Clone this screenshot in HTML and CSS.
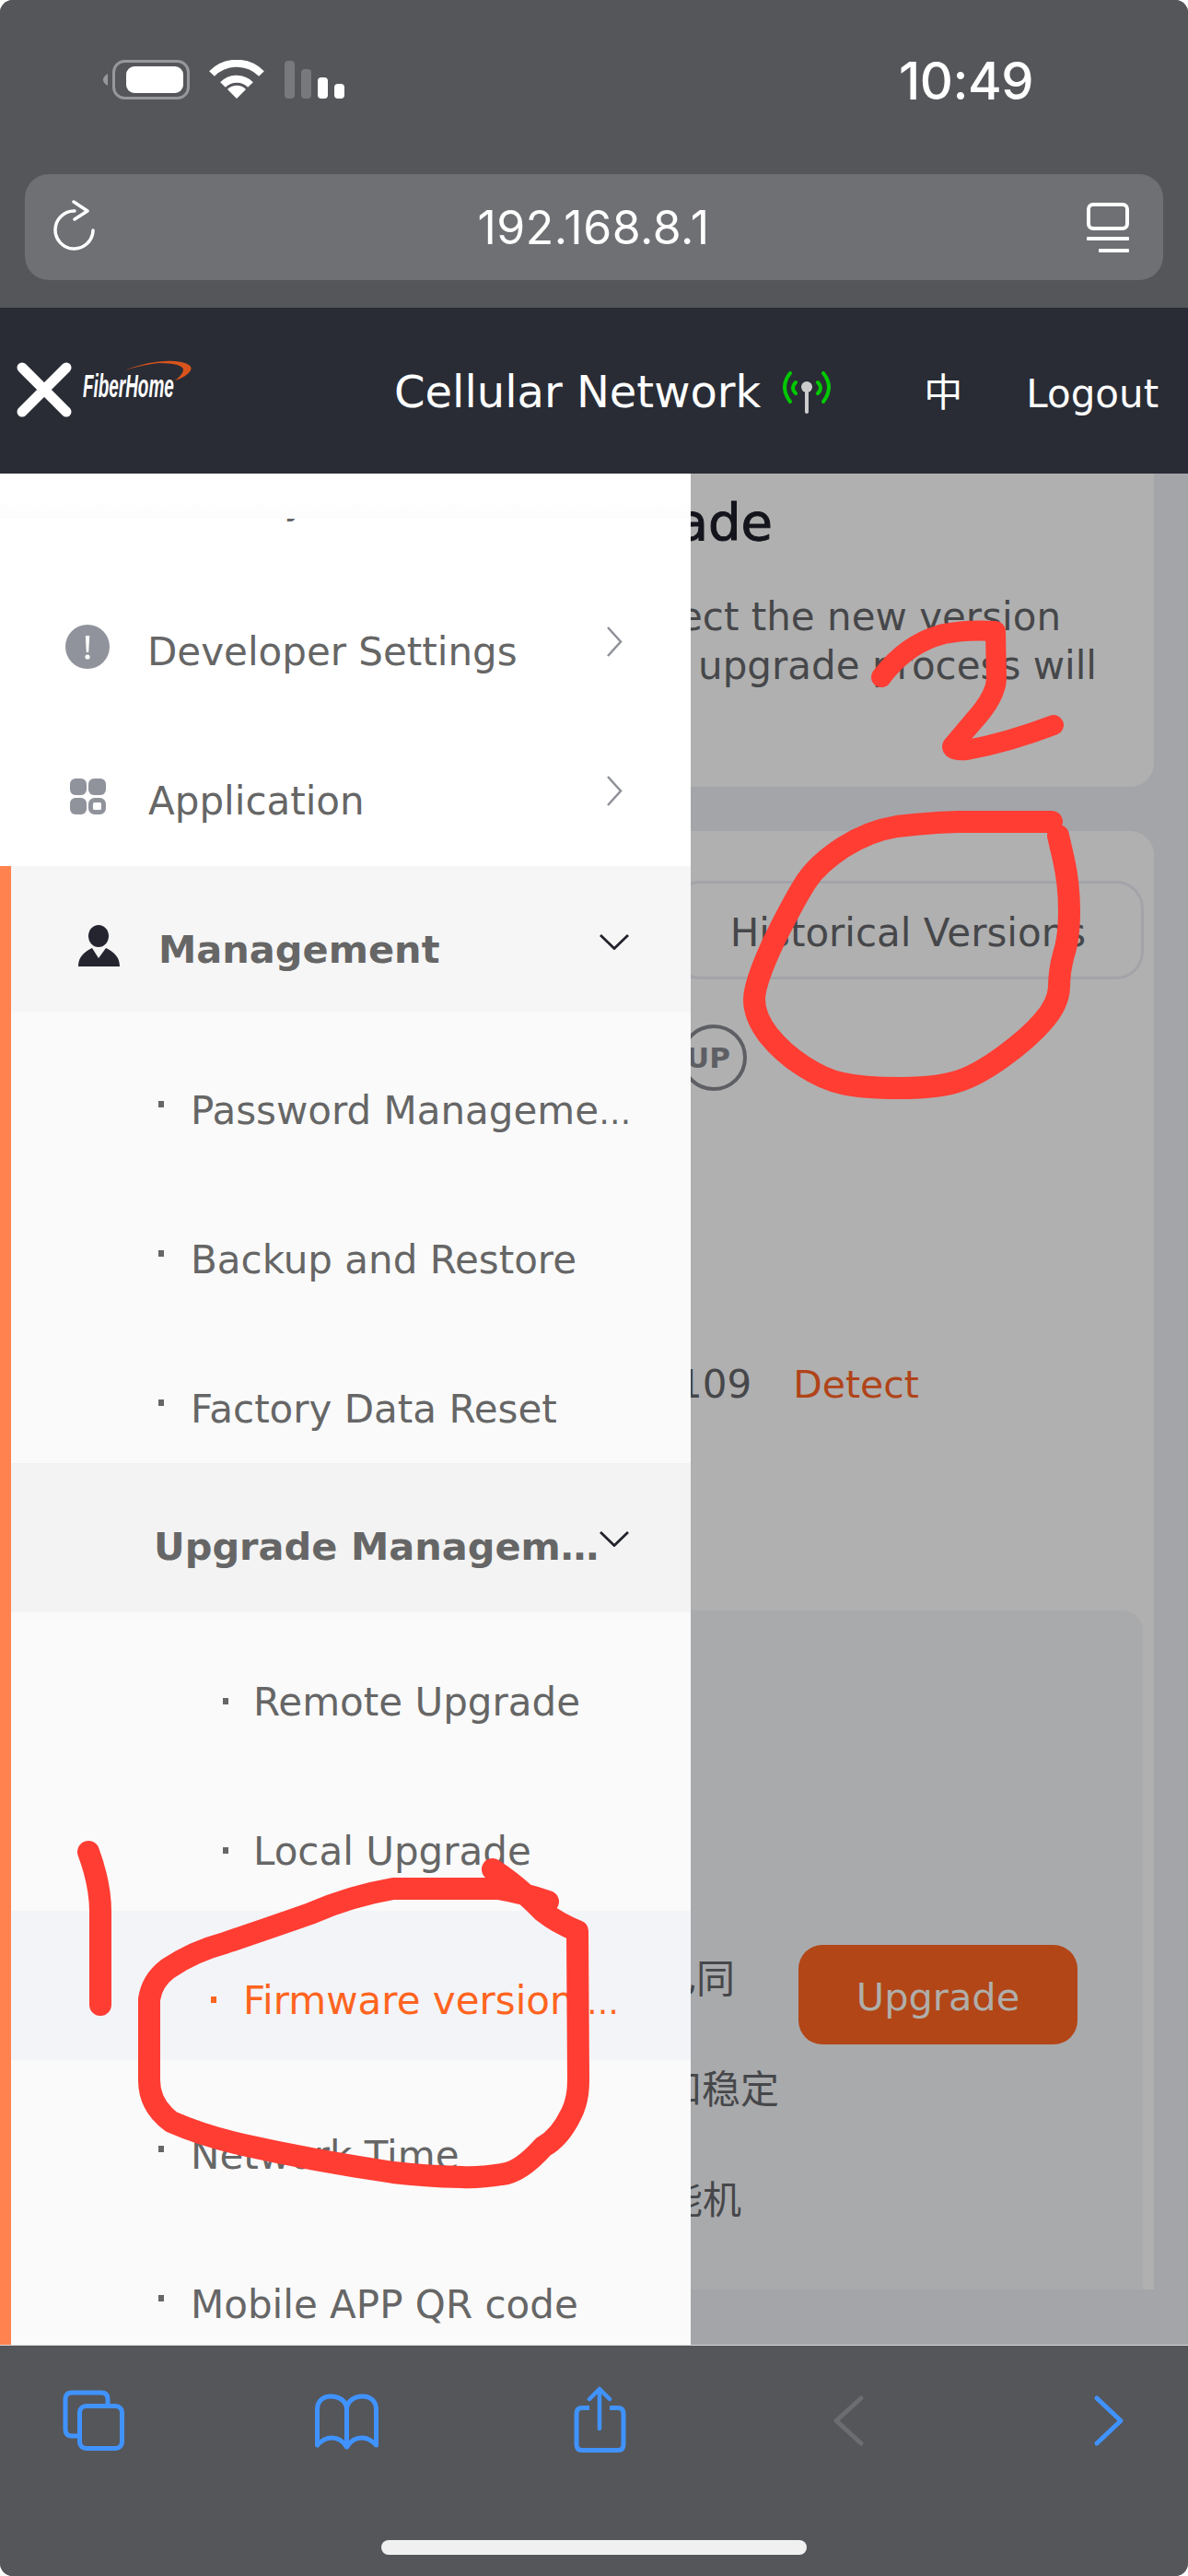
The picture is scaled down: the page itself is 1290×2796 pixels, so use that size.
FILE: index.html
```html
<!DOCTYPE html>
<html lang="en">
<head>
<meta charset="utf-8">
<title>Firmware version</title>
<link rel="stylesheet" href="styles.css">
</head>
<body>
<div class="phone">
  <div class="chrome">
    <div class="status">
      <svg class="status-icons" width="263" height="43" viewBox="112 65 263 43">
        <path d="M117 80 L117 93 Q112 90 112 86.5 Q112 83 117 80Z" fill="#97989c"/>
        <rect x="123.5" y="66.5" width="81" height="40" rx="12" fill="none" stroke="#97989c" stroke-width="3"/>
        <rect x="137" y="72" width="62" height="29" rx="9" fill="#fff"/>
        <path d="M230 80 A38 38 0 0 1 284 80" fill="none" stroke="#fff" stroke-width="8"/>
        <path d="M242 92 A21 21 0 0 1 272 92" fill="none" stroke="#fff" stroke-width="8"/>
        <path d="M257 107 L247 97 A14 14 0 0 1 267 97Z" fill="#fff"/>
        <rect x="309" y="66" width="11" height="41" rx="4" fill="#78797d"/>
        <rect x="327" y="75" width="11" height="32" rx="4" fill="#78797d"/>
        <rect x="345" y="84" width="11" height="23" rx="4" fill="#fff"/>
        <rect x="363" y="91" width="11" height="16" rx="4" fill="#fff"/>
      </svg>
      <span class="time">10:49</span>
    </div>
    <div class="urlbar">
      <svg class="reload" width="46" height="56" viewBox="58 217 46 56">
        <path d="M81 229 A20.5 20.5 0 1 0 101 250" fill="none" stroke="#fff" stroke-width="3.5" stroke-linecap="round"/>
        <path d="M80 219 L95 229 L81 238" fill="none" stroke="#fff" stroke-width="3.5" stroke-linecap="round" stroke-linejoin="round"/>
      </svg>
      <span class="url">192.168.8.1</span>
      <svg class="reader" width="46" height="54" viewBox="1180 220 46 54">
        <rect x="1182" y="222" width="42" height="26" rx="5" fill="none" stroke="#fff" stroke-width="4"/>
        <rect x="1180" y="257" width="46" height="4" rx="1" fill="#fff"/>
        <rect x="1193" y="270" width="33" height="4" rx="1" fill="#fff"/>
      </svg>
    </div>
  </div>

  <header class="hdr">
    <svg class="x-mark" width="60" height="60" viewBox="18 393 60 60">
      <path d="M24 399 L72 447 M72 399 L24 447" stroke="#fff" stroke-width="11" stroke-linecap="round"/>
    </svg>
    <div class="brand">
      <span class="word">FiberHome</span>
      <svg class="swoosh" width="80" height="26" viewBox="132 390 80 26">
        <path d="M135 402 Q172 388 197 393 Q210 396 207 402 Q203 409 190 413 Q199 406 199 401 Q197 394 172 394 Q155 396 135 402Z" fill="#d9541c"/>
      </svg>
    </div>
    <span class="net">Cellular Network</span>
    <svg class="antenna" width="53" height="46" viewBox="850 405 53 46">
      <path d="M858 407 Q846 422 858 438 M894 407 Q906 422 894 438 M864 417 Q858 423 864 429 M888 417 Q894 423 888 429" fill="none" stroke="#00c800" stroke-width="4" stroke-linecap="round"/>
      <path d="M876 422 V449" stroke="#ccc" stroke-width="4" stroke-linecap="round"/>
      <circle cx="876" cy="422" r="6" fill="#ccc"/>
    </svg>
    <span class="lang">中</span>
    <span class="logout">Logout</span>
  </header>

  <div class="workspace">
    <nav class="sidebar">
      <div class="fade"></div>
      <div class="row row-first"><span class="label">Security</span></div>
      <div class="row">
        <svg class="ico ico-dev" width="48" height="48" viewBox="71 678 48 48">
          <circle cx="95" cy="702" r="24" fill="#90939b"/>
          <path d="M92.8 690 H97.2 L96.2 708 H93.8Z" fill="#fff"/>
          <circle cx="95" cy="713" r="2.6" fill="#fff"/>
        </svg>
        <span class="label label-dev">Developer Settings</span>
        <svg class="chev-r" width="18" height="33" viewBox="659 681 18 33">
          <path d="M661 682 L675 697.5 L661 713" fill="none" stroke="#8e9097" stroke-width="2.5"/>
        </svg>
      </div>
      <div class="row">
        <svg class="ico ico-app" width="39" height="39" viewBox="76 845 39 39">
          <rect x="76" y="845" width="18" height="18" rx="6" fill="#90939b"/>
          <rect x="96" y="845" width="19" height="18" rx="6" fill="#90939b"/>
          <rect x="76" y="866" width="18" height="18" rx="6" fill="#90939b"/>
          <rect x="98.500" y="868.500" width="14" height="13" rx="4" fill="none" stroke="#90939b" stroke-width="5"/>
        </svg>
        <span class="label label-app">Application</span>
        <svg class="chev-r" width="18" height="33" viewBox="659 681 18 33">
          <path d="M661 682 L675 697.5 L661 713" fill="none" stroke="#8e9097" stroke-width="2.500"/>
        </svg>
      </div>

      <div class="active">
        <div class="mgmt">
          <svg class="ico-person" width="45" height="45" viewBox="85 1004 45 45">
            <ellipse cx="107" cy="1016" rx="11" ry="12" fill="#24252e"/>
            <path d="M85 1049 C85 1038 92 1033 100 1029 L107 1040 L115 1029 C123 1033 130 1038 130 1049Z" fill="#24252e"/>
          </svg>
          <span class="mgmt-label">Management</span>
          <svg class="chev-d chev-mgmt" width="32" height="17" viewBox="0 0 32 17">
            <path d="M1 1 L16 15.500 L31 1" fill="none" stroke="#22232b" stroke-width="2.800"/>
          </svg>
        </div>
        <div class="sub sub-first"><i class="dot"></i><span>Password Manageme<span class="ell">…</span></span></div>
        <div class="sub"><i class="dot"></i>Backup and Restore</div>
        <div class="sub"><i class="dot"></i>Factory Data Reset</div>
        <div class="group">
          <span class="group-label">Upgrade Managem…</span>
          <svg class="chev-d chev-group" width="32" height="17" viewBox="0 0 32 17">
            <path d="M1 1 L16 15.500 L31 1" fill="none" stroke="#22232b" stroke-width="2.800"/>
          </svg>
        </div>
        <div class="sub2"><i class="dot dot2"></i>Remote Upgrade</div>
        <div class="sub2"><i class="dot dot2"></i>Local Upgrade</div>
        <div class="sub2 current"><i class="dot dot2"></i><span>Firmware version <span class="ell">…</span></span></div>
        <div class="sub"><i class="dot"></i>Network Time</div>
        <div class="sub"><i class="dot"></i>Mobile APP QR code</div>
      </div>
    </nav>

    <main class="main">
      <section class="card-a">
        <div class="title"><span>Upgrade</span></div>
        <div class="para para-1"><span>Select the new version</span></div>
        <div class="para para-2"><span>The upgrade process will</span></div>
      </section>
      <section class="card-b">
        <button class="hist">Historical Versions</button>
        <div class="up-badge">UP</div>
        <div class="ver-row"><span class="ver">109</span><span class="detect">Detect</span></div>
        <div class="inner">
          <div class="lines">
            <div class="cjk cjk-1">已同</div>
            <div class="cjk cjk-2">和稳定</div>
            <div class="cjk cjk-3">能机</div>
          </div>
          <button class="upgrade">Upgrade</button>
        </div>
      </section>
    </main>
  </div>

  <footer class="toolbar">
    <div class="tools">
      <svg class="tool t-tabs" width="72" height="75" viewBox="66 2590 72 75">
        <path d="M84 2644 H78 Q71 2644 71 2637 V2604 Q71 2597 78 2597 H110 Q117 2597 117 2604 V2609" fill="none" stroke="#4093ff" stroke-width="5"/>
        <rect x="86.500" y="2611.500" width="46" height="46" rx="7" fill="none" stroke="#4093ff" stroke-width="5"/>
      </svg>
      <svg class="tool t-book" width="73" height="75" viewBox="340 2590 73 75">
        <path d="M344.500 2654 V2615 C344.500 2606 351 2601 359 2601 C368 2601 376.500 2606 376.500 2615 C376.500 2606 385 2601 394 2601 C402 2601 408.500 2606 408.500 2615 V2654 C403 2648 398 2646 393 2646 C386 2646 380 2650 376.500 2656 C373 2650 367 2646 360 2646 C355 2646 350 2648 344.500 2654Z M376.500 2615 V2656" fill="none" stroke="#4093ff" stroke-width="5" stroke-linejoin="round" stroke-linecap="round"/>
      </svg>
      <svg class="tool t-share" width="63" height="75" viewBox="620 2590 63 75">
        <path d="M640 2613.500 H632 Q626 2613.500 626 2620 V2653 Q626 2659.500 632 2659.500 H671 Q677 2659.500 677 2653 V2620 Q677 2613.500 671 2613.500 H662" fill="none" stroke="#4093ff" stroke-width="5"/>
        <path d="M651 2636 V2594 M640 2604 L651 2593 L662 2604" fill="none" stroke="#4093ff" stroke-width="4.500" stroke-linecap="round" stroke-linejoin="round"/>
      </svg>
      <svg class="tool t-back" width="38" height="75" viewBox="903 2590 38 75">
        <path d="M935 2603 L908 2627.500 L935 2652" fill="none" stroke="#6c6d71" stroke-width="5" stroke-linecap="round" stroke-linejoin="round"/>
      </svg>
      <svg class="tool t-fwd" width="38" height="75" viewBox="1186 2590 38 75">
        <path d="M1191 2603 L1217 2627.500 L1191 2652" fill="none" stroke="#4093ff" stroke-width="5" stroke-linecap="round" stroke-linejoin="round"/>
      </svg>
    </div>
    <div class="home"></div>
  </footer>

  <svg class="ink" width="1290" height="2796" viewBox="0 0 1290 2796">
    <g fill="none" stroke="#ff3d33" stroke-linecap="round" stroke-linejoin="round">
      <path stroke-width="22" d="M957 735 Q985 698 1025 688 Q1050 683 1081 685 L1082 737 Q1081 757 1056 784 L1034 810 Q1034 815 1050 814 Q1094 806 1144 787"/>
      <path stroke-width="24" d="M1142 892 L1040 892 Q1005 893 974 897 Q943 902 915 920 Q888 938 876 956 Q864 974 841 1020 Q819 1067 819 1085 Q819 1103 834 1123 Q850 1143 872 1157 Q895 1172 915 1176 Q936 1181 977 1181 Q1018 1181 1039 1174 Q1060 1168 1089 1147 Q1118 1126 1133 1108 Q1149 1090 1150 1072 Q1150 1054 1155 1036 Q1161 1018 1161 989 Q1161 960 1155 933 L1149 907"/>
      <path stroke-width="24" d="M96 2010 Q109 2045 109 2075 L109 2176"/>
      <path stroke-width="24" d="M535 2029 Q560 2045 590 2075 Q605 2087 627 2096 L628 2258 Q628 2280 620 2295 Q608 2320 590 2330 Q565 2358 545 2360 Q520 2364 501 2363 Q460 2362 427 2358 Q340 2345 264 2328 Q220 2318 186 2303 Q162 2285 162 2258 L162 2170 Q165 2150 182 2137 Q210 2118 244 2109 Q300 2090 337 2077 Q380 2058 427 2050 L541 2050 Q570 2055 595 2064"/>
    </g>
  </svg>
</div>
</body>
</html>
```
FILE: styles.css
```css
* { box-sizing: border-box; }
html, body { margin: 0; padding: 0; background: #fff; }
body { font-family: "DejaVu Sans", "Noto Sans CJK SC", sans-serif; }

.phone {
  position: relative;
  width: 1290px;
  height: 2796px;
  overflow: hidden;
  border-radius: 14px;
  display: flex;
  flex-direction: column;
  background: #55565a;
}

/* browser chrome */
.chrome { height: 334px; flex: none; background: #55565a; }
.status {
  display: flex;
  justify-content: space-between;
  align-items: flex-start;
  height: 189px;
  padding: 65px 168px 0 112px;
}
.status-icons { display: block; }
.time {
  font-family: Inter, "Liberation Sans", sans-serif;
  font-weight: 500;
  font-size: 56px;
  line-height: 56px;
  color: #fff;
  margin-top: -5px;
  letter-spacing: -.5px;
}
.urlbar {
  margin: 0 27px;
  height: 115px;
  border-radius: 26px;
  background: #6f7074;
  display: flex;
  justify-content: space-between;
  align-items: center;
  padding: 0 37px 0 31px;
}
.url {
  font-family: Inter, "Liberation Sans", sans-serif;
  font-size: 50px;
  color: #fff;
  letter-spacing: .5px;
  margin-left: 5px;
}
.reload { margin-top: -4px; }
.reader { margin-top: 1px; }

/* router header */
.hdr {
  flex: none;
  height: 180px;
  background: #292c35;
  display: flex;
  align-items: flex-start;
  padding-left: 18px;
  color: #fff;
}
.x-mark { margin-top: 59px; flex: none; }
.brand { position: relative; width: 120px; height: 60px; margin: 52px 0 0 12px; flex: none; }
.word {
  display: block;
  font-family: "Liberation Sans", sans-serif;
  font-weight: 700;
  font-style: italic;
  font-size: 35px;
  line-height: 40px;
  color: #fff;
  white-space: nowrap;
  transform: scaleX(.54);
  transform-origin: left center;
  margin-top: 13px;
}
.swoosh { position: absolute; left: 42px; top: 4px; }
.net {
  font-size: 48px;
  line-height: 60px;
  margin: 61px 0 0 218px;
  white-space: nowrap;
  flex: none;
}
.antenna { margin: 69px 0 0 24px; flex: none; }
.lang {
  font-family: "Noto Sans CJK SC", sans-serif;
  font-size: 42px;
  line-height: 50px;
  margin: 64px 0 0 100px;
  flex: none;
}
.logout {
  font-size: 42px;
  line-height: 50px;
  margin: 69px 0 0 69px;
  flex: none;
}

/* workspace */
.workspace { flex: none; height: 2032px; display: flex; overflow: hidden; }

.sidebar {
  position: relative;
  flex: none;
  width: 750px;
  background: #fff;
  overflow: hidden;
  color: #666;
  font-size: 42px;
  line-height: 50px;
  white-space: nowrap;
}
.fade {
  position: absolute;
  left: 0;
  top: 0;
  width: 100%;
  height: 49px;
  background: linear-gradient(#fff 55%, #fcfcfc);
  z-index: 1;
}
.row {
  display: flex;
  align-items: flex-start;
  height: 162px;
  padding: 67px 74px 0 71px;
}
.row-first { margin-top: -60px; padding: 64px 0 0 161px; }
.ico { flex: none; }
.ico-dev { margin-top: -5px; }
.ico-app { margin: 0 0 0 5px; }
.label-dev { margin-left: 41px; }
.label-app { margin-left: 46px; }
.chev-r { margin: -3px 0 0 auto; flex: none; }

.active { border-left: 12px solid #ff824f; background: #fafafa; }

.mgmt {
  display: flex;
  align-items: flex-start;
  height: 159px;
  background: #f6f6f6;
  padding: 66px 67px 0 73px;
}
.ico-person { flex: none; margin-top: -2px; }
.mgmt-label { font-weight: 700; font-size: 41.5px; margin-left: 42px; }
.chev-d { flex: none; margin-left: auto; }
.chev-mgmt { margin-top: 8px; }

.sub, .sub2 { display: flex; align-items: flex-start; height: 162px; }
.sub { padding: 79px 0 0 160px; }
.sub-first { height: 165px; padding-top: 82px; }
.sub2 { padding: 73px 0 0 230px; }
.dot { flex: none; width: 6px; height: 7px; margin: 14px 29px 0 0; background: #666; }
.dot2 { margin: 20px 27px 0 0; }
.ell { font-size: 35px; }

.group {
  display: flex;
  align-items: flex-start;
  height: 162px;
  background: #f3f3f3;
  padding: 66px 67px 0 155px;
}
.group-label { font-weight: 700; flex: none; font-size: 41.5px; }
.chev-group { margin-top: 8px; }

.sub2.current { background: #f3f4f8; color: #ff6420; padding-left: 217px; }
.current .dot { background: #ff6420; margin-right: 29px; }

/* dimmed page behind the drawer */
.main {
  flex: 1;
  min-width: 0;
  overflow: hidden;
  background: #a4a5a9;
  color: #46474a;
  font-size: 42px;
  line-height: 50px;
  white-space: nowrap;
}
.card-a {
  width: 503px;
  height: 340px;
  background: #b0b0b0;
  border-bottom-right-radius: 26px;
  padding-top: 18px;
  margin-bottom: 48px;
}
.title, .para { display: flex; justify-content: flex-end; }
.title {
  font-size: 56px;
  line-height: 70px;
  color: #14141c;
  -webkit-text-stroke: 1px #14141c;
  padding-right: 414px;
  margin-bottom: 41px;
}
.para { line-height: 53px; }
.para-1 { padding-right: 101px; }
.para-2 { padding-right: 62px; }

.card-b {
  width: 503px;
  height: 1583px;
  background: #b0b0b0;
  border-top-right-radius: 26px;
  display: flex;
  flex-direction: column;
  align-items: flex-start;
}
.hist {
  flex: none;
  width: 512px;
  height: 107px;
  margin: 54px 0 0 -20px;
  border: 3px solid #a3a4a8;
  border-radius: 30px;
  background: transparent;
  font: inherit;
  color: #46474a;
  padding: 7px 0 0;
}
.up-badge {
  flex: none;
  width: 72px;
  height: 72px;
  margin: 49px 0 0 -11px;
  border: 4px solid #5e5f64;
  border-radius: 50%;
  font-size: 31px;
  font-weight: 700;
  line-height: 64px;
  padding-left: 2px;
  color: #5e5f64;
}
.ver-row { display: flex; margin: 294px 0 0 -14px; }
.detect { margin-left: 45px; color: #b04419; font-size: 41px; }

.inner {
  flex: none;
  margin-top: auto;
  width: 491px;
  height: 737px;
  background: #a9aaac;
  border-top-right-radius: 22px;
  display: flex;
  align-items: flex-start;
  padding-top: 337px;
}
.lines { width: 117px; flex: none; }
.cjk { font-family: "Noto Sans CJK SC", sans-serif; line-height: 120px; }
.cjk-1 { margin-left: -36px; }
.cjk-2 { margin-left: -30px; }
.cjk-3 { margin-left: -29px; }
.upgrade {
  flex: none;
  width: 303px;
  height: 108px;
  margin-top: 26px;
  border: 0;
  border-radius: 26px;
  background: #b24617;
  color: #b0aeaa;
  font: inherit;
  font-size: 41.5px;
  padding: 6px 0 0;
}

/* browser toolbar */
.toolbar {
  flex: none;
  height: 250px;
  background: #55565a;
  box-shadow: 0 -1px 0 #d8d8d8;
  position: relative;
  padding-top: 44px;
}
.tools { display: flex; height: 75px; }
.tool { flex: none; display: block; }
.t-tabs { margin-left: 66px; }
.t-book { margin-left: 202px; }
.t-share { margin-left: 207px; }
.t-back { margin-left: 220px; }
.t-fwd { margin-left: 245px; }
.home {
  width: 462px;
  height: 16px;
  margin: 92px 0 0 414px;
  border-radius: 8px;
  background: #f0f0f0;
}

/* hand-drawn annotation over the whole screenshot */
.ink { position: absolute; left: 0; top: 0; pointer-events: none; }
```
